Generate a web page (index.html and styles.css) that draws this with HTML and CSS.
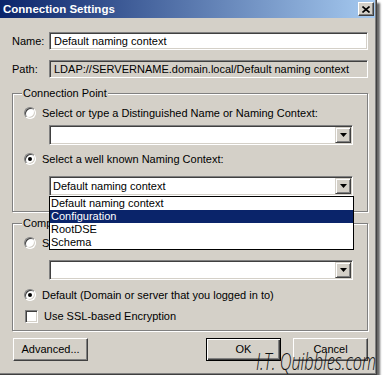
FILE: index.html
```html
<!DOCTYPE html>
<html lang="en">
<head>
  <meta charset="UTF-8">
  <title>Connection Settings</title>
  <link rel="stylesheet" href="styles.css">
</head>
<body>

<div class="window">
  <div class="titlebar">
    <span class="title">Connection Settings</span>
    <span class="close-btn">
      <svg width="8" height="7" viewBox="0 0 8 7"><path d="M0.5 0.5 L7.5 6.5 M7.5 0.5 L0.5 6.5" stroke="#000" stroke-width="1.6"/></svg>
    </span>
  </div>

  <div class="content">
    <div class="row">
      <span class="label">Name:</span>
      <div class="field">Default naming context</div>
    </div>
    <div class="row path-row">
      <span class="label">Path:</span>
      <div class="field readonly">LDAP://SERVERNAME.domain.local/Default naming context</div>
    </div>

    <fieldset class="group point-group">
      <legend>Connection Point</legend>
      <div class="option"><span class="radio"></span>Select or type a Distinguished Name or Naming Context:</div>
      <div class="combo">
        <span class="value"></span>
        <span class="drop"><svg width="7" height="4" viewBox="0 0 7 4"><polygon points="0,0 7,0 3.5,4" fill="#000"/></svg></span>
      </div>
      <div class="option option-known"><span class="radio checked"></span>Select a well known Naming Context:</div>
      <div class="combo combo-open">
        <span class="value">Default naming context</span>
        <span class="drop"><svg width="7" height="4" viewBox="0 0 7 4"><polygon points="0,0 7,0 3.5,4" fill="#000"/></svg></span>
        <ul class="list">
          <li>Default naming context</li>
          <li class="selected">Configuration</li>
          <li>RootDSE</li>
          <li>Schema</li>
        </ul>
      </div>
    </fieldset>

    <fieldset class="group computer-group">
      <legend>Computer</legend>
      <div class="option option-server"><span class="radio"></span>Select or type a domain or server:</div>
      <div class="combo">
        <span class="value"></span>
        <span class="drop"><svg width="7" height="4" viewBox="0 0 7 4"><polygon points="0,0 7,0 3.5,4" fill="#000"/></svg></span>
      </div>
      <div class="option option-default"><span class="radio checked"></span>Default (Domain or server that you logged in to)</div>
      <div class="option option-ssl"><span class="checkbox"></span>Use SSL-based Encryption</div>
    </fieldset>

    <div class="buttons">
      <span class="btn">Advanced...</span>
      <span class="btn btn-default">OK</span>
      <span class="btn">Cancel</span>
    </div>
  </div>

  <div class="watermark">I.T. Quibbles.com</div>
</div>

</body>
</html>
```

FILE: styles.css
```css
body {
  margin: 0;
  background: #fff;
  font-family: "Liberation Sans", Arial, sans-serif;
  font-size: 11px;
  color: #000;
}

.window {
  position: relative;
  width: 377px;
  height: 375px;
  background: #d4d0c8;
  box-shadow: inset -1px -1px 0 #404040, inset -2px -2px 0 #808080, 3px 3px 2px rgba(0,0,0,0.6);
}

.titlebar {
  height: 18px;
  margin-right: 2px;
  display: flex;
  align-items: center;
  justify-content: space-between;
  padding: 0 1px 0 3px;
  background: linear-gradient(to right, #0a246a, #a6caf0);
}
.title {
  color: #fff;
  font-weight: bold;
  font-size: 11.5px;
}
.close-btn {
  width: 14px;
  height: 12px;
  display: flex;
  align-items: center;
  justify-content: center;
  background: #d4d0c8;
  border: 1px solid;
  border-color: #fff #404040 #404040 #fff;
  box-shadow: inset -1px -1px 0 #808080;
}

.content {
  padding: 0 9px 0 12px;
}

.row {
  display: flex;
  align-items: center;
  margin-top: 14px;
}
.path-row {
  margin-top: 10px;
}
.label {
  width: 37px;
}
.field {
  flex: 1;
  height: 15px;
  line-height: 15px;
  padding: 1px 3px 0 4px;
  background: #fff;
  border: 1px solid;
  border-color: #808080 #fff #fff #808080;
  box-shadow: inset 1px 1px 0 #404040, inset -1px -1px 0 #d4d0c8;
  white-space: nowrap;
}
.field.readonly {
  background: #d4d0c8;
}

/* group boxes */
.group {
  margin: 9px 0 0 0;
  padding: 5px 14px 15px 0;
  min-width: 0;
  border: 1px solid #808080;
  box-shadow: 1px 1px 0 #fff, inset 1px 1px 0 #fff;
}
.group legend {
  margin-left: 9px;
  padding: 0 1px;
  line-height: 13px;
  background: #d4d0c8;
}
.computer-group {
  margin-top: 5px;
  padding-top: 5px;
  padding-bottom: 6px;
}

.option {
  display: flex;
  align-items: center;
  height: 16px;
  padding-left: 11px;
  white-space: nowrap;
}
.option-known {
  margin-top: 6px;
}
.option-default {
  margin-top: 7px;
}
.option-ssl {
  margin-top: 5px;
}

.radio {
  position: relative;
  width: 10px;
  height: 10px;
  margin-right: 6px;
  border-radius: 50%;
  background: #fff;
  border: 1px solid;
  border-color: #808080 #fff #fff #808080;
  box-shadow: inset 1px 1px 0 #404040, inset -1px -1px 0 #d4d0c8;
}
.radio.checked::after {
  content: "";
  position: absolute;
  left: 3px;
  top: 3px;
  width: 4px;
  height: 4px;
  border-radius: 50%;
  background: #000;
}
.checkbox {
  width: 11px;
  height: 11px;
  margin: 0 6px 0 1px;
  background: #fff;
  border: 1px solid;
  border-color: #808080 #fff #fff #808080;
  box-shadow: inset 1px 1px 0 #404040, inset -1px -1px 0 #d4d0c8;
}

.combo {
  position: relative;
  display: flex;
  align-items: center;
  height: 18px;
  margin: 4px 0 0 36px;
  background: #fff;
  border: 1px solid;
  border-color: #808080 #fff #fff #808080;
  box-shadow: inset 1px 1px 0 #404040, inset -1px -1px 0 #d4d0c8;
}
.combo-open {
  margin-top: 9px;
}
.computer-group .combo {
  margin-top: 9px;
}
.combo .value {
  flex: 1;
  padding-left: 3px;
}
.drop {
  width: 14px;
  height: 14px;
  margin-right: 1px;
  display: flex;
  align-items: center;
  justify-content: center;
  background: #d4d0c8;
  border: 1px solid;
  border-color: #d4d0c8 #404040 #404040 #d4d0c8;
  box-shadow: inset 1px 1px 0 #fff, inset -1px -1px 0 #808080;
}

.list {
  position: absolute;
  top: 100%;
  left: -1px;
  right: -2px;
  margin: 1px 0 0;
  padding: 0;
  list-style: none;
  background: #fff;
  border: 1px solid #000;
  z-index: 2;
}
.list li {
  height: 13px;
  line-height: 13px;
  padding-left: 1px;
}
.list li.selected {
  background: #0a246a;
  color: #fff;
}

.buttons {
  display: flex;
  margin-top: 7px;
  gap: 12px;
}
.btn {
  width: 73px;
  height: 21px;
  line-height: 21px;
  text-align: center;
  border: 1px solid;
  border-color: #fff #404040 #404040 #fff;
  box-shadow: inset -1px -1px 0 #808080;
}
.buttons .btn:first-child {
  margin-left: 1px;
}
.btn-default {
  margin-left: auto;
  border-color: #000;
  box-shadow: inset 1px 1px 0 #fff, inset -1px -1px 0 #404040, inset -2px -2px 0 #808080;
}

.watermark {
  position: absolute;
  left: 256px;
  top: 344px;
  font-family: "Open Sans", "Liberation Sans", sans-serif;
  font-style: italic;
  font-weight: 300;
  font-size: 24px;
  color: #111;
  white-space: nowrap;
  transform: scaleX(0.68);
  transform-origin: left top;
  z-index: 3;
}
```
